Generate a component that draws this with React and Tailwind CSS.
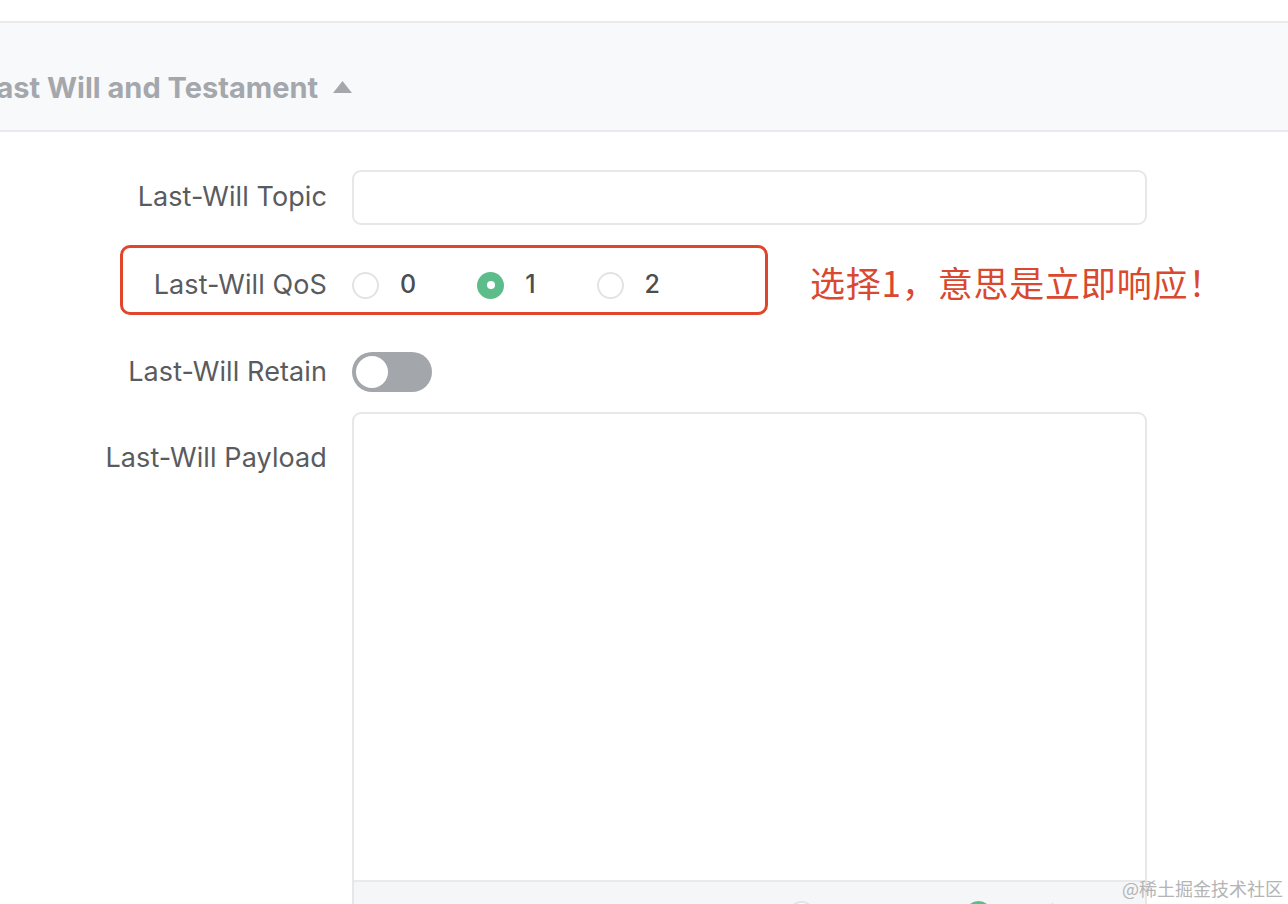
import React from "react";

const sans = { fontFamily: 'Inter, "Noto Sans CJK SC", sans-serif' };
const cjk = { fontFamily: '"Noto Sans CJK SC", sans-serif' };

function Radio({ checked, label, green }) {
    return (
        <label className="flex items-center gap-[21px]">
            {checked ? (
                <span className="flex h-[27px] w-[27px] items-center justify-center rounded-full bg-[#5cbd8a]">
                    <span className="h-[8px] w-[8px] rounded-full bg-white" />
                </span>
            ) : (
                <span className="h-[27px] w-[27px] rounded-full border-2 border-[#e2e3e5] bg-white" />
            )}
            <span className={`text-[25px] font-medium ${green ? "text-[#5cbd8a]" : "text-[#4d4d4f]"}`}>
                {label}
            </span>
        </label>
    );
}

function FormLabel({ children, className = "" }) {
    return (
        <div className={`w-[327px] shrink-0 text-right text-[27px] tracking-[0.1px] text-[#5a5b5e] ${className}`}>
            {children}
        </div>
    );
}

export default function App() {
    return (
        <div className="relative h-[904px] w-full overflow-hidden bg-white" style={sans}>
            {/* top spacer */}
            <div className="h-[21px]" />

            {/* collapsible section header */}
            <div className="flex h-[111px] items-center border-y-2 border-[#e8eaed] bg-[#f8f9fb] pt-[22px]">
                <div className="ml-[-20px] flex items-center gap-[14px]">
                    <span className="text-[29px] font-bold text-[#a4a7ac]">Last Will and Testament</span>
                    <svg width="21" height="14" viewBox="0 0 21 14" className="mt-[-2px]">
                        <path d="M10.5 1 L20 13 L1 13 Z" fill="#a4a7ac" />
                    </svg>
                </div>
            </div>

            {/* form */}
            <div className="pt-[38px]">
                {/* topic */}
                <div className="flex items-center gap-[25px]">
                    <FormLabel>Last-Will Topic</FormLabel>
                    <div className="h-[55px] w-[795px] rounded-[9px] border-2 border-[#e6e7e9] bg-white" />
                </div>

                {/* qos */}
                <div className="mt-[40px] flex h-[40px] items-center gap-[25px]">
                    <FormLabel>Last-Will QoS</FormLabel>
                    <div className="flex items-center gap-[61px]">
                        <Radio label="0" />
                        <Radio label="1" checked />
                        <Radio label="2" />
                    </div>
                </div>

                {/* retain */}
                <div className="mt-[47px] flex h-[40px] items-center gap-[25px]">
                    <FormLabel>Last-Will Retain</FormLabel>
                    <div className="flex h-[40px] w-[80px] items-center rounded-full bg-[#a3a6ab] px-[4px]">
                        <span className="h-[32px] w-[32px] rounded-full bg-white" />
                    </div>
                </div>

                {/* payload */}
                <div className="mt-[20px] flex items-start gap-[25px]">
                    <FormLabel className="pt-[26px]">Last-Will Payload</FormLabel>
                    <div className="flex h-[540px] w-[795px] flex-col rounded-[9px] border-2 border-[#e6e7e9] bg-white">
                        <div className="h-[466px]" />
                        <div className="flex flex-1 items-start gap-[60px] border-t-2 border-[#e8eaed] bg-[#f5f6f8] pl-[434px] pt-[14px]">
                            <Radio label="JSON" />
                            <Radio label="Plaintext" checked green />
                        </div>
                    </div>
                </div>
            </div>

            {/* annotation */}
            <div className="absolute left-[120px] top-[245px] h-[70px] w-[648px] rounded-[10px] border-[3px] border-[#e0462c]" />
            <div
                className="absolute left-[810px] top-[259px] text-[35px] leading-[46px] tracking-[0.8px] text-[#d9482f]"
                style={cjk}
            >
                选择1，意思是立即响应！
            </div>

            {/* watermark */}
            <div className="absolute right-[5px] top-[875px] text-[18px] text-[#b4b4b4]" style={cjk}>
                @稀土掘金技术社区
            </div>
        </div>
    );
}
